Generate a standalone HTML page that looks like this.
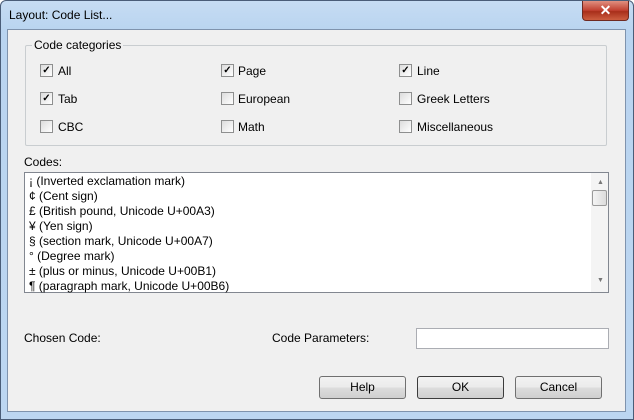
<!DOCTYPE html>
<html><head><style>
body{margin:0;width:634px;height:420px;overflow:hidden;font-family:"Liberation Sans",sans-serif;font-size:11px;color:#000;background:#fff}
.win{position:absolute;left:0;top:0;width:632px;height:418px;border:1px solid #4a5d78;border-radius:6px 6px 0 0;background:linear-gradient(180deg,#c6dcf3 0,#b9d4f0 30px,#bcd6f1 100%)}
.title{position:absolute;left:8px;top:7px;font-size:12px;color:#000}
.close{position:absolute;left:581px;top:0;width:45px;height:19px;border:1px solid #6e2a22;border-top:none;border-radius:0 0 4px 4px;background:linear-gradient(#e09080,#c04030 50%,#a82e1a 55%,#cc5e40);color:#fff;font-weight:bold;text-align:center;font-size:14px;line-height:18px}
.client{position:absolute;left:7px;top:29px;width:617px;height:381px;background:#f0f0f0;border:1px solid #7f93ad}
.a{position:absolute;white-space:nowrap}
.cb{position:absolute;width:11px;height:11px;border:1px solid #8e8f8f;background:linear-gradient(135deg,#dcdcdc,#fff);font-size:10px;line-height:11px;text-align:center;font-weight:bold}
.grp{position:absolute;left:25px;top:45px;width:580px;height:99px;border:1px solid #c9cdd0;border-radius:2px}
.list{position:absolute;left:24px;top:172px;width:583px;height:119px;border:1px solid #828790;background:#fff;font-size:12px}
.list div{position:absolute;left:4px;white-space:nowrap}
.btn{position:absolute;top:376px;width:85px;height:21px;border:1px solid #707070;border-radius:3px;background:linear-gradient(#f2f2f2,#ebebeb 50%,#dddddd 51%,#cfcfcf);text-align:center;line-height:21px;font-size:12px}
</style></head><body>
<div class="win">
<div class="title">Layout: Code List...</div>
<div class="close">✕</div>
</div>
<div class="client"></div>
<div class="grp"></div>
<div class="a" style="left:32px;top:38px;background:#f0f0f0;padding:0 2px;font-size:12px">Code categories</div>
<div class="cb" style="left:40px;top:64px">✓</div><div class="a" style="left:58px;top:64px;font-size:12px">All</div>
<div class="cb" style="left:221px;top:64px">✓</div><div class="a" style="left:238px;top:64px;font-size:12px">Page</div>
<div class="cb" style="left:399px;top:64px">✓</div><div class="a" style="left:417px;top:64px;font-size:12px">Line</div>
<div class="cb" style="left:40px;top:92px">✓</div><div class="a" style="left:58px;top:92px;font-size:12px">Tab</div>
<div class="cb" style="left:221px;top:92px"></div><div class="a" style="left:238px;top:92px;font-size:12px">European</div>
<div class="cb" style="left:399px;top:92px"></div><div class="a" style="left:417px;top:92px;font-size:12px">Greek Letters</div>
<div class="cb" style="left:40px;top:120px"></div><div class="a" style="left:58px;top:120px;font-size:12px">CBC</div>
<div class="cb" style="left:221px;top:120px"></div><div class="a" style="left:238px;top:120px;font-size:12px">Math</div>
<div class="cb" style="left:399px;top:120px"></div><div class="a" style="left:417px;top:120px;font-size:12px">Miscellaneous</div>
<div class="a" style="left:24px;top:155px;font-size:12px">Codes:</div>
<div class="list">
<div style="top:1px">¡ (Inverted exclamation mark)</div>
<div style="top:16px">¢ (Cent sign)</div>
<div style="top:31px">£ (British pound, Unicode U+00A3)</div>
<div style="top:46px">¥ (Yen sign)</div>
<div style="top:61px">§ (section mark, Unicode U+00A7)</div>
<div style="top:76px">° (Degree mark)</div>
<div style="top:91px">± (plus or minus, Unicode U+00B1)</div>
<div style="top:106px">¶ (paragraph mark, Unicode U+00B6)</div>
<div style="left:566px;top:0;width:17px;height:119px;background:#f4f4f4"></div>
<div style="left:572px;top:6px;font-size:7px;color:#777">▲</div>
<div style="left:567px;top:17px;width:13px;height:14px;border:1px solid #9a9a9a;border-radius:2px;background:linear-gradient(90deg,#f4f4f4,#dcdcdc)"></div>
<div style="left:572px;top:104px;font-size:7px;color:#777">▼</div>
</div>
<div class="a" style="left:24px;top:331px;font-size:12px">Chosen Code:</div>
<div class="a" style="left:272px;top:331px;font-size:12px">Code Parameters:</div>
<div class="a" style="left:416px;top:328px;width:191px;height:19px;border:1px solid #abadb3;background:#fff"></div>
<div class="btn" style="left:319px">Help</div>
<div class="btn" style="left:417px;border-color:#3c3c3c">OK</div>
<div class="btn" style="left:515px">Cancel</div>
</body></html>
